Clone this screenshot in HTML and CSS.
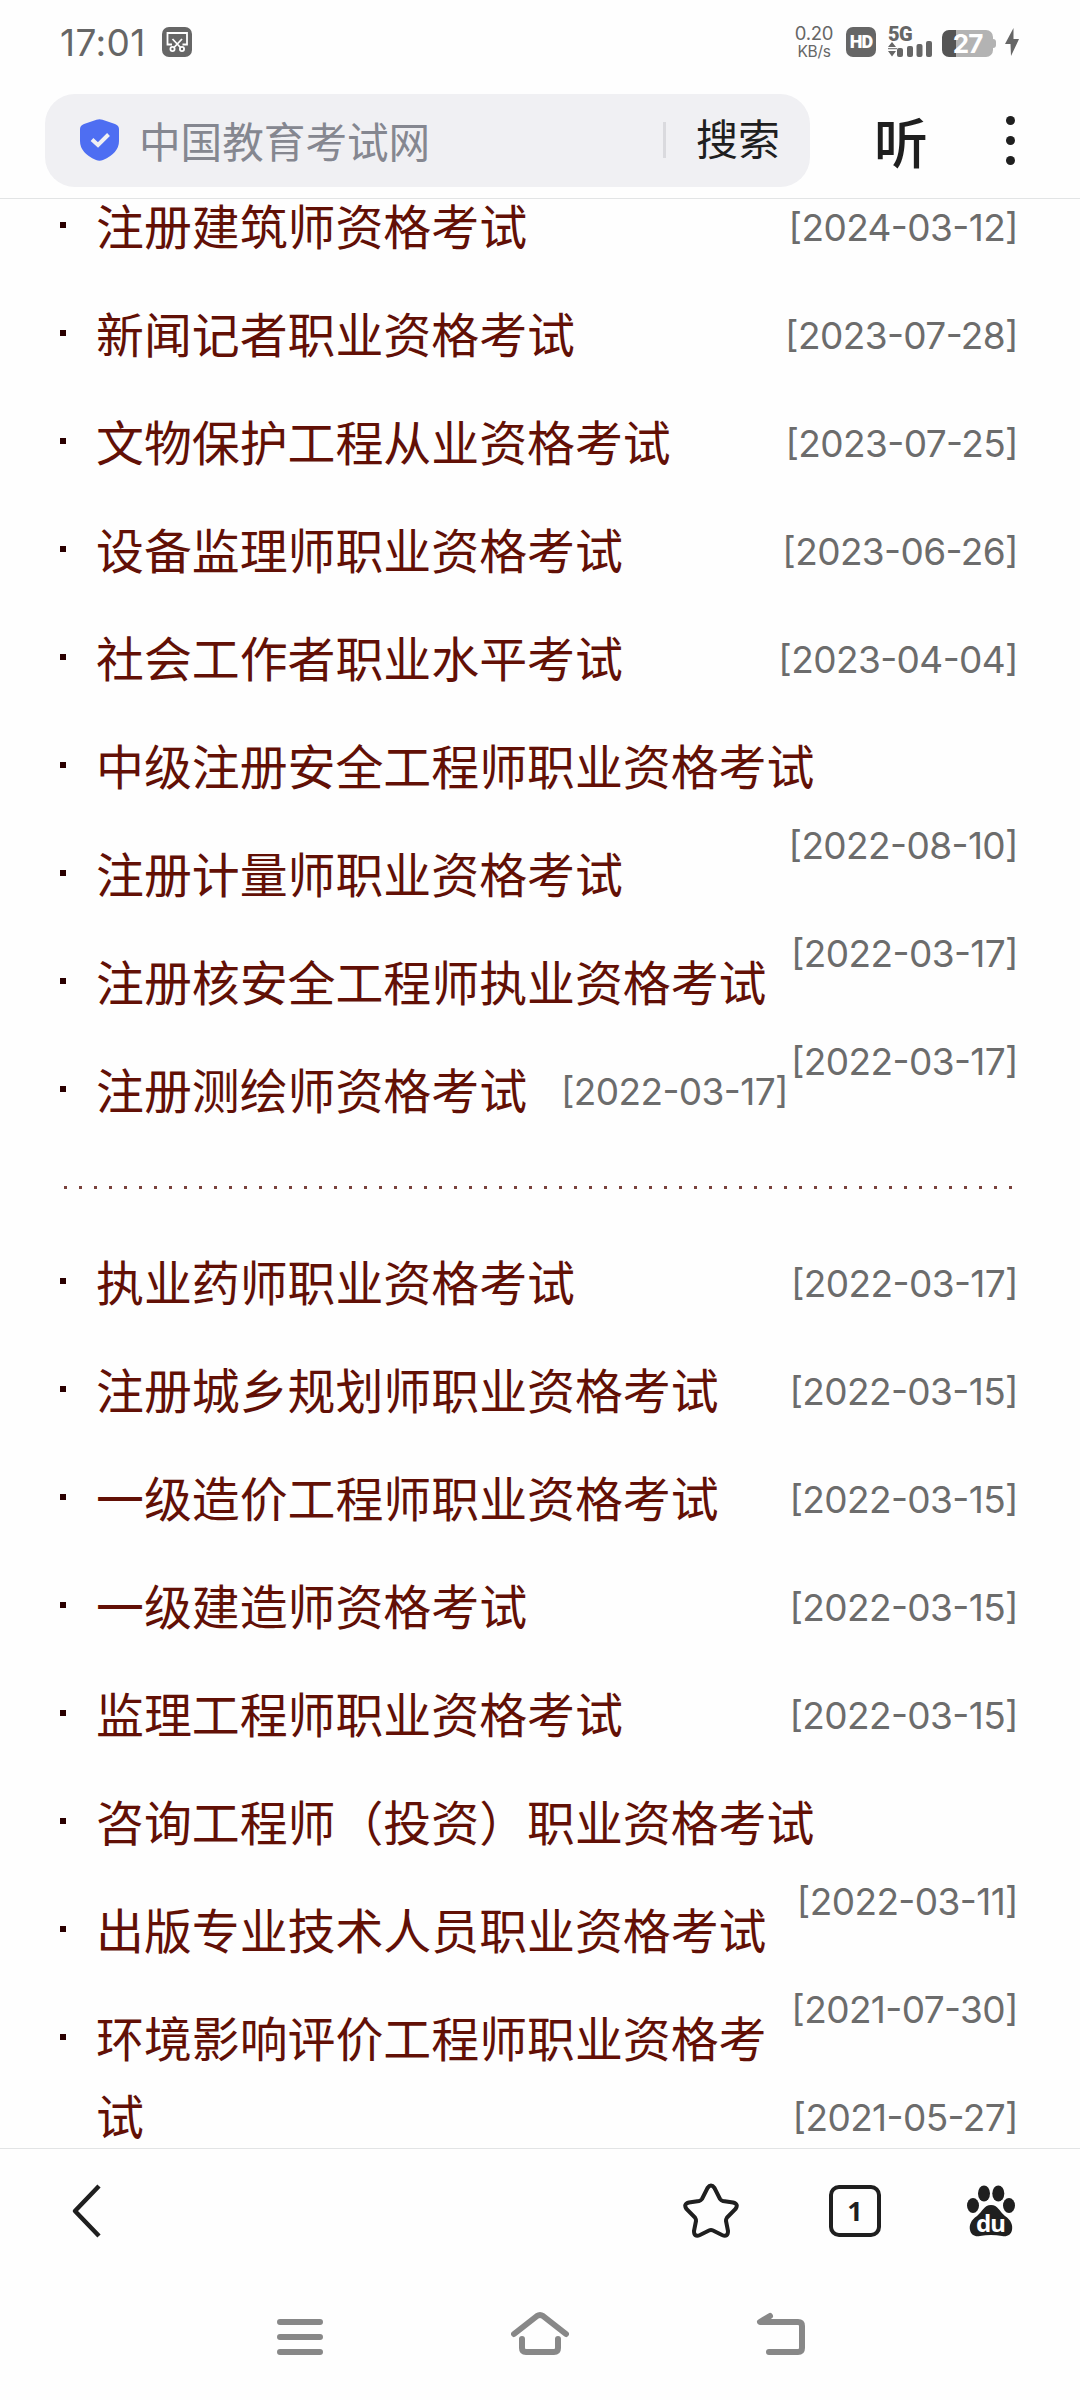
FILE: index.html
```html
<!DOCTYPE html>
<html lang="zh-CN">
<head>
    <meta charset="UTF-8">
    <title>中国教育考试网</title>
    <link rel="stylesheet" href="styles.css">
</head>
<body>
<div class="wrapper">
    <div class="status">
        <span class="time">17:01</span>
        <svg class="cut" width="30" height="30" viewBox="0 0 30 30">
            <rect width="30" height="30" rx="7" fill="#666"/>
            <g fill="none" stroke="#fff" stroke-width="1.8">
                <path d="M10 17.500H5.500V6H25V17.500H20.500"/>
                <path d="M10.500 12L18.500 20.500M20 12L12 20.500"/>
                <circle cx="10.500" cy="22" r="2.100"/>
                <circle cx="20" cy="22" r="2.100"/>
            </g>
        </svg>
        <div class="speed">0.20<br><small>KB/s</small></div>
        <span class="hd">HD</span>
        <div class="signal">
            <span>5G</span>
            <svg width="44" height="16" viewBox="0 0 44 16" fill="#666">
                <path d="M0 6L4 1L8 6ZM0 10H8L4 15.500Z"/>
                <rect x="0" y="7.200" width="9" height="1"/>
                <rect x="9" y="7" width="6" height="9" rx="2"/>
                <rect x="19" y="5" width="6" height="11" rx="2"/>
                <rect x="28.500" y="3" width="6" height="13" rx="2"/>
                <rect x="38" y="0" width="6" height="16" rx="2"/>
            </svg>
        </div>
        <div class="battery">27</div>
        <svg class="bolt" width="14" height="28" viewBox="0 0 14 28"><path d="M8.500 0L0 16H5.500L6 28L14 11H8.500Z" fill="#666"/></svg>
    </div>
    <div class="header">
        <div class="search">
            <svg width="39" height="42" viewBox="0 0 39 42">
                <path d="M16.500 .8Q19.500 -.3 22.500 .8L35 5Q39 6.500 39 10V22Q39 34 23 41Q19.500 42.500 16 41Q0 34 0 22V10Q0 6.500 4 5Z" fill="#4e6ef2"/>
                <path d="M12 20.500L18 26L28.500 15.500" fill="none" stroke="#f0f0f3" stroke-width="4"/>
            </svg>
            <span class="site">中国教育考试网</span>
            <span class="go">搜索</span>
        </div>
        <span class="listen">听</span>
        <div class="dots"><i></i><i></i><i></i></div>
    </div>
    <div class="content">
        <ul class="list">
            <li><span>[2024-03-12]</span><a>注册建筑师资格考试</a></li>
            <li><span>[2023-07-28]</span><a>新闻记者职业资格考试</a></li>
            <li><span>[2023-07-25]</span><a>文物保护工程从业资格考试</a></li>
            <li><span>[2023-06-26]</span><a>设备监理师职业资格考试</a></li>
            <li><span>[2023-04-04]</span><a>社会工作者职业水平考试</a></li>
            <li><a>中级注册安全工程师职业资格考试</a><span>[2022-08-10]</span></li>
            <li><a>注册计量师职业资格考试</a><span>[2022-03-17]</span></li>
            <li><a>注册核安全工程师执业资格考试</a><span>[2022-03-17]</span></li>
            <li><a>注册测绘师资格考试</a><span>[2022-03-17]</span></li>
        </ul>
        <div class="line"></div>
        <ul class="list">
            <li><span>[2022-03-17]</span><a>执业药师职业资格考试</a></li>
            <li><span>[2022-03-15]</span><a>注册城乡规划师职业资格考试</a></li>
            <li><span>[2022-03-15]</span><a>一级造价工程师职业资格考试</a></li>
            <li><span>[2022-03-15]</span><a>一级建造师资格考试</a></li>
            <li><span>[2022-03-15]</span><a>监理工程师职业资格考试</a></li>
            <li><a>咨询工程师（投资）职业资格考试</a><span>[2022-03-11]</span></li>
            <li><a>出版专业技术人员职业资格考试</a><span>[2021-07-30]</span></li>
            <li><a>环境影响评价工程师职业资格考试</a><span>[2021-05-27]</span></li>
        </ul>
    </div>
    <div class="toolbar">
        <svg class="back" width="32" height="56" viewBox="0 0 32 56"><path d="M28 3L4 28L28 53" fill="none" stroke="#1f1f1f" stroke-width="4.500" stroke-linejoin="round"/></svg>
        <svg class="star" width="56" height="56" viewBox="0 0 56 56">
            <path d="M24.500 5Q28 0 31.500 5L37 16Q38 17.500 40 18L50 19.500Q56 21 52.500 26L44 34.500Q43 36 43 38L45 48Q45 54.500 39 52L30 47.500Q28 46.500 26 47.500L17 52Q11 54.500 11 48L13 38Q13 36 12 34.500L3.500 26Q0 21 6 19.500L16 18Q18 17.500 19 16Z" fill="none" stroke="#1f1f1f" stroke-width="4"/>
        </svg>
        <span class="tabs">1</span>
        <svg class="paw" width="48" height="52" viewBox="0 0 48 52">
            <g fill="#1f1f1f">
                <ellipse cx="17" cy="8.500" rx="6" ry="8"/>
                <ellipse cx="31.300" cy="8.500" rx="6" ry="8"/>
                <ellipse cx="6" cy="20.500" rx="6" ry="7.500"/>
                <ellipse cx="42" cy="20.500" rx="6" ry="7.500"/>
                <path d="M24 20C31 20 32 26 38 31C44 35 46 40 45 45C44 50 40 52 35 51Q24 49 13 51C8 52 4 50 3 45C2 40 4 35 10 31C16 26 17 20 24 20Z"/>
            </g>
            <text x="23.500" y="46.500" text-anchor="middle">du</text>
        </svg>
    </div>
    <div class="nav">
        <svg width="46" height="60" viewBox="0 0 46 60"><path d="M3 17H43M3 32H43M3 47H43"/></svg>
        <svg width="58" height="60" viewBox="0 0 58 60"><path d="M3 29L26 11Q29 9 32 11L55 29M11 34V43Q11 47 15 47H43Q47 47 47 43V34"/></svg>
        <svg width="50" height="60" viewBox="0 0 50 60"><path d="M14 11L4 17H42Q46 17 46 21V43Q46 47 42 47H13"/></svg>
    </div>
</div>
</body>
</html>
```

FILE: styles.css
```css
html, body {
    height: 100%;
    margin: 0;
    background-color: #fefefe;
    font-family: Inter, "Noto Sans CJK SC", sans-serif;
}

svg {
    display: block;
}

.wrapper {
    display: flex;
    flex-direction: column;
    height: 2400px;
    width: 1080px;
    overflow: hidden;
}

.status {
    display: flex;
    align-items: center;
    box-sizing: border-box;
    height: 84px;
    padding: 0 61px 0 60px;
    color: #666;
}

.time {
    font-size: 37px;
    letter-spacing: 0.4px;
    width: 102px;
}

.speed {
    width: 40px;
    margin-left: auto;
    font-size: 18.500px;
    line-height: 17px;
    letter-spacing: -0.3px;
    text-align: center;
}

.speed small {
    font-size: 15.500px;
    line-height: 14px;
}

.hd {
    width: 30px;
    height: 30px;
    margin-left: 12px;
    border-radius: 7px;
    background-color: #666;
    color: #fff;
    font: 900 18px/30px Roboto, sans-serif;
    letter-spacing: -1px;
    text-align: center;
}

.signal {
    width: 44px;
    height: 30px;
    margin-left: 12px;
}

.signal span {
    display: block;
    height: 14px;
    font: 900 20px/15px Roboto, sans-serif;
    letter-spacing: -0.5px;
}

.battery {
    position: relative;
    width: 51px;
    height: 27px;
    margin: 2px 1px 0 10px;
    border-radius: 7px;
    background: linear-gradient(to right, #555 14px, #b3b3b3 14px);
    color: #fff;
    font-size: 26px;
    font-weight: 700;
    line-height: 27px;
    letter-spacing: -1px;
    text-align: center;
}

.battery::after {
    content: "";
    position: absolute;
    left: 51px;
    top: 9px;
    width: 3px;
    height: 9px;
    border-radius: 0 3px 3px 0;
    background-color: #b3b3b3;
}

.bolt {
    margin-left: 11px;
}

.header {
    display: flex;
    align-items: center;
    box-sizing: border-box;
    height: 115px;
    padding: 0 65px 2px 45px;
    border-bottom: 1px solid #e2e4e5;
    color: #1f1f1f;
}

.search {
    display: flex;
    align-items: center;
    box-sizing: border-box;
    width: 765px;
    height: 93px;
    padding: 0 30px 0 35px;
    border-radius: 30px;
    background-color: #f0f0f3;
    font-size: 42px;
}

.site {
    margin-left: 20px;
    color: #858790;
    font-size: 41.600px;
}

.go {
    margin-left: auto;
    padding-left: 30px;
    border-left: 3px solid #dadade;
    line-height: 36px;
}

.listen {
    margin-left: 64px;
    font-size: 54px;
    font-weight: 500;
}

.dots {
    display: flex;
    flex-direction: column;
    gap: 11px;
    margin-left: auto;
}

.dots i {
    width: 9px;
    height: 9px;
    border-radius: 50%;
    background-color: #1f1f1f;
}

.content {
    flex: 1;
    overflow: hidden;
    padding: 0 63px 0 60px;
}

.list {
    list-style: none;
    margin: -10px 0 0;
    padding: 0;
}

.list li {
    min-height: 78px;
    margin-bottom: 30px;
    padding-left: 36px;
    background: linear-gradient(#2a0000, #2a0000) no-repeat 0 33px / 6px 6px;
    font-size: 47.900px;
    line-height: 78px;
}

.list a {
    color: #621006;
}

.list span {
    float: right;
    margin: 0 -1px 0 4px;
    color: #6c6c6c;
    font-size: 37px;
    font-feature-settings: "calt" 1;
    letter-spacing: -0.6px;
}

.line {
    height: 3px;
    margin: 55px 0 66px 4px;
    background: repeating-linear-gradient(to right, #7a423c 0 3px, transparent 3px 15px);
}

.toolbar {
    display: flex;
    align-items: center;
    box-sizing: border-box;
    height: 125px;
    padding: 0 65px 0 71px;
    border-top: 1px solid #e2e4e5;
}

.star {
    margin-left: auto;
}

.tabs {
    box-sizing: border-box;
    width: 52px;
    height: 52px;
    margin: 0 86px 0 90px;
    border: 4px solid #1f1f1f;
    border-radius: 10px;
    color: #1f1f1f;
    font: bold 27px/44px "Noto Sans", sans-serif;
    text-align: center;
}

.paw text {
    fill: #fff;
    font: bold 24px "Noto Sans", sans-serif;
    letter-spacing: -1px;
}

.nav {
    display: flex;
    justify-content: space-between;
    height: 95px;
    padding: 32px 274px 0 277px;
}

.nav path {
    fill: none;
    stroke: #888;
    stroke-width: 6;
    stroke-linecap: round;
    stroke-linejoin: round;
}
```
